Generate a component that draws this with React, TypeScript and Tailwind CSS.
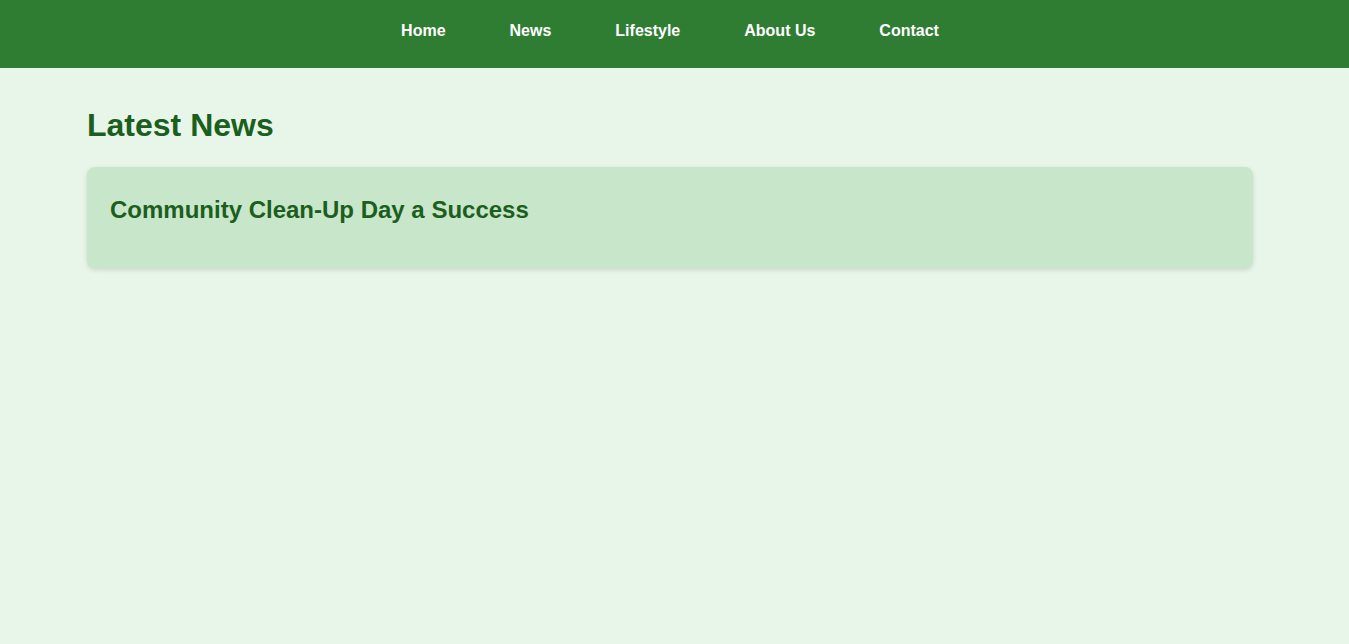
import React from "react";

export default function App() {
  const links = ["Home", "News", "Lifestyle", "About Us", "Contact"];
  return (
    <div className="min-h-[644px] bg-[#e8f5e9] font-['Liberation_Sans',Arial,sans-serif]">
      <header className="h-[68px] bg-[#2e7d32]">
        <nav className="flex justify-center gap-[64px] pt-[22px] w-[1340px]">
          {links.map((l) => (
            <a key={l} href="#" className="text-white font-bold text-[16px] leading-[18px]">
              {l}
            </a>
          ))}
        </nav>
      </header>
      <main className="pl-[87px] w-[1253px] pt-[39px]">
        <h2 className="text-[32px] leading-[37px] font-bold text-[#1b5e20]">Latest News</h2>
        <div className="mt-[23px] rounded-lg bg-[#c8e6c9] shadow-[0_2px_5px_rgba(0,0,0,0.12)] px-[23px] pt-[29px] pb-[44px]">
          <h3 className="text-[24px] leading-[28px] font-bold text-[#1b5e20]">
            Community Clean-Up Day a Success
          </h3>
        </div>
      </main>
    </div>
  );
}
